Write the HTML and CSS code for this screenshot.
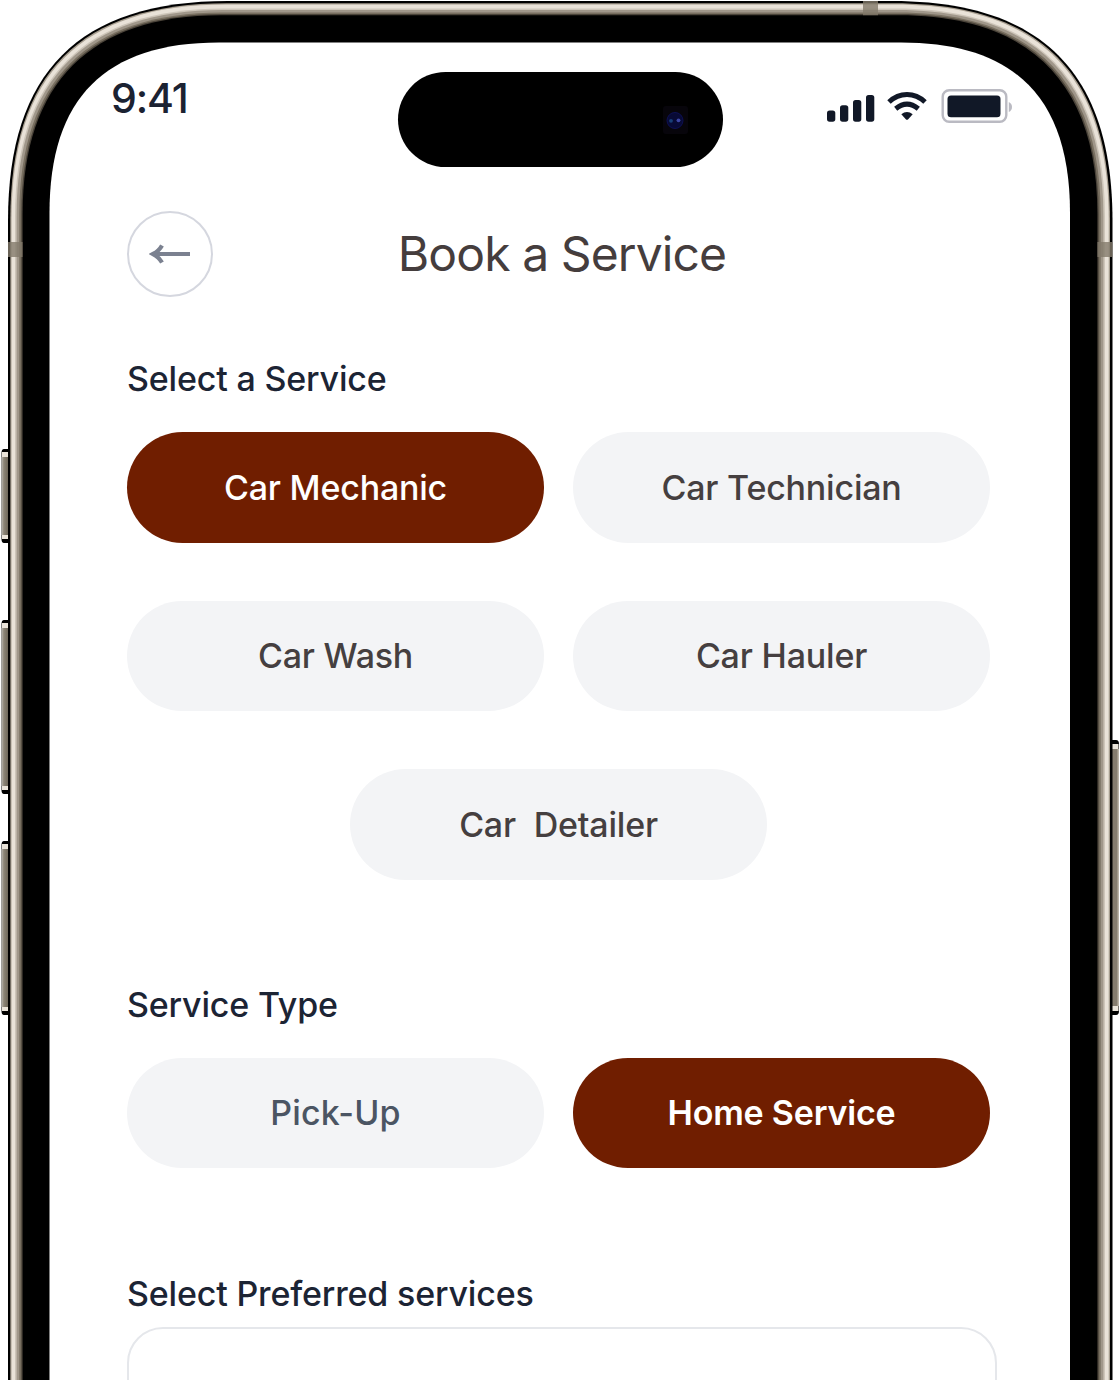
FILE: index.html
```html
<!DOCTYPE html>
<html lang="en">
<head>
<meta charset="utf-8">
<title>Book a Service</title>
<link rel="stylesheet" href="styles.css">
</head>
<body>
<div class="phone">
  <svg class="frame" viewBox="0 0 1120 1380" aria-hidden="true">
    <defs>
      <linearGradient id="key" x1="0" x2="1"><stop offset="0" stop-color="#bdbab5"/><stop offset=".35" stop-color="#8d8678"/><stop offset="1" stop-color="#6f685b"/></linearGradient>
    </defs>
    <g id="left-keys">
      <path fill="#000" d="M9 449H4Q1.500 449 1.500 453V539Q1.500 543 4 543H9ZM9 620H4Q1.500 620 1.500 624V790Q1.500 794 4 794H9ZM9 841H4Q1.500 841 1.500 845V1011Q1.500 1015 4 1015H9Z"/>
      <path fill="#e9e3d9" d="M2 452H8V539H2ZM2 623H8V790H2ZM2 844H8V1011H2Z"/>
      <path fill="url(#key)" d="M1.500 457H8V535H1.500ZM1.500 628H8V786H1.500ZM1.500 849H8V1007H1.500Z"/>
    </g>
    <path fill="#000" d="M1111 740H1116Q1119 740 1119 744V1011Q1119 1015 1116 1015H1111Z"/>
    <path fill="#e9e3d9" d="M1112 744H1118.500V1011H1112Z"/>
    <path fill="#857c6e" d="M1112 749H1118V1006H1112Z"/>
    <path fill="#bbb3a6" d="M1117.500 749H1119V1006H1117.500Z"/>
    <path fill="#000" d="M8 1400V221C8 72 79 1 228 1H892C1041 1 1112.500 72 1112.500 221V1400Z"/>
    <path fill="#a79e90" d="M10.300 1400V220C10.300 73 80 3.200 227 3.200H893C1040 3.200 1110 73 1110 220V1400Z"/>
    <path fill="#e9e2d8" d="M11.500 1400V219C11.500 74 82 4.500 226 4.500H894C1038 4.500 1108.700 74 1108.700 219V1400Z"/>
    <path fill="#cdc5b9" d="M15 1400V217C15 77 85 8.500 224 8.500H896C1035 8.500 1105 77 1105 217V1400Z"/>
    <path fill="#a0978a" d="M16.600 1400V216C16.600 78 86 10 223 10H897C1034 10 1103.400 78 1103.400 216V1400Z"/>
    <path fill="#786f60" d="M19.300 1400V215C19.300 80 88 12.500 222 12.500H898C1032 12.500 1100.700 80 1100.700 215V1400Z"/>
    <path fill="#4b443a" d="M21.300 1400V214C21.300 81 90 14 221 14H899C1030 14 1098.700 81 1098.700 214V1400Z"/>
    <path fill="#000" d="M22.600 1400V214C22.600 82 91 15.300 221 15.300H899C1029 15.300 1097.400 82 1097.400 214V1400Z"/>
    <g fill="#837a6c" fill-opacity=".8">
      <path d="M8 242H22.600V257H8ZM1097.400 242H1112.500V257H1097.400ZM863 1H878V15.300H863Z"/>
    </g>
    <path fill="#fff" d="M49.500 1400V213C49.500 98 105 42.500 219 42.500H901C1015 42.500 1070 98 1070 213V1400Z"/>
  </svg>

  <header class="status">
    <span class="time">9:41</span>
    <div class="island">
      <svg width="26" height="28" viewBox="0 0 26 28"><rect width="25" height="28" rx="3" fill="#07050b"/><circle cx="12" cy="14.500" r="8" fill="#080a35" stroke="#0d1054"/><circle cx="8" cy="14.800" r="1.900" fill="#173f78"/><circle cx="15.500" cy="14.300" r="1.900" fill="#3d46a5"/></svg>
    </div>
    <svg class="indicators" width="186" height="36" viewBox="0 0 186 36">
      <g fill="#111827">
        <rect x="1" y="22.500" width="8.300" height="11.200" rx="2.600"/><rect x="14" y="17.300" width="8.300" height="16.400" rx="2.600"/><rect x="27" y="12" width="8.300" height="21.700" rx="2.600"/><rect x="40" y="7" width="8.300" height="26.700" rx="2.600"/>
        <path d="M75.300 26.300Q81 21.500 86.700 26.300L82.200 31.200Q81 32.400 79.800 31.200Z"/>
      </g>
      <g fill="none" stroke="#111827" stroke-width="5">
        <path d="M63 14C73.500 4 88.500 4 99 14"/><path d="M69.700 20.700Q81 11.500 92.300 20.700"/>
      </g>
      <rect x="116.700" y="2.200" width="63.600" height="31.600" rx="6.500" fill="none" stroke="#babac2" stroke-width="2.400"/>
      <rect x="121.500" y="7.400" width="53" height="21.800" rx="3.500" fill="#111827"/>
      <path d="M182.800 14Q186 15.500 186 19Q186 22.500 182.800 24Z" fill="#babac2"/>
    </svg>
  </header>

  <main class="content">
    <div class="titlebar">
      <button class="back" aria-label="Back"><svg width="42" height="22" viewBox="0 0 42 22" fill="none" stroke="#7b8190" stroke-width="4.200"><path d="M5 11H41"/><path d="M13 2.500Q10 8 4 11Q10 14 13 19.500"/></svg></button>
      <h1>Book a Service</h1>
    </div>

    <h2 class="first">Select a Service</h2>
    <div class="options">
      <button class="pill active">Car Mechanic</button>
      <button class="pill">Car Technician</button>
      <button class="pill">Car Wash</button>
      <button class="pill">Car Hauler</button>
      <button class="pill center">Car&nbsp; Detailer</button>
    </div>

    <h2 class="type">Service Type</h2>
    <div class="options">
      <button class="pill muted">Pick-Up</button>
      <button class="pill active strong">Home Service</button>
    </div>

    <h2 class="preferred">Select Preferred services</h2>
    <div class="field"></div>
  </main>
</div>
</body>
</html>
```
FILE: styles.css
```css
* { box-sizing: border-box; }
body { margin: 0; background: #fff; font-family: Inter, "Liberation Sans", sans-serif; }
button { border: 0; padding: 0; font: inherit; color: inherit; }
.phone { position: relative; width: 1120px; height: 1380px; overflow: hidden; }
.frame { position: absolute; inset: 0; width: 1120px; height: 1380px; }
.status {
  position: relative;
  display: grid;
  grid-template-columns: 287px 325px 1fr;
  height: 211px;
  padding: 72px 108px 0 111px;
}
.time { font-size: 41px; line-height: 52px; font-weight: 500; color: #1b2232; letter-spacing: -1.1px; }
.island {
  display: flex;
  align-items: center;
  justify-content: flex-end;
  height: 95px;
  padding-right: 34px;
  border-radius: 48px;
  background: #000;
}
.indicators { justify-self: end; margin-top: 16px; }
.content { position: relative; padding: 0 123px 0 127px; }
.titlebar { display: grid; grid-template-columns: 86px 1fr 86px; align-items: center; height: 86px; }
.back {
  display: flex;
  align-items: center;
  justify-content: center;
  width: 86px;
  height: 86px;
  border: 2px solid #d5d7df;
  border-radius: 50%;
  background: #fff;
}
h1 { margin: 0; text-align: center; font-size: 48px; line-height: 60px; font-weight: 400; color: #453d3d; white-space: nowrap; letter-spacing: -0.9px; }
h2 { margin: 0; height: 42px; font-size: 34px; line-height: 42px; font-weight: 500; color: #1c2434; white-space: nowrap; letter-spacing: -0.18px; }
.first { margin-top: 61px; }
.options { display: grid; grid-template-columns: 417px 417px; gap: 58px 29px; margin-top: 32px; }
.pill {
  display: flex;
  align-items: center;
  justify-content: center;
  height: 110.5px;
  border-radius: 56px;
  background: #f3f4f6;
  color: #453f40;
  font-size: 34px;
  font-weight: 500;
  letter-spacing: -0.2px;
  white-space: nowrap;
}
.active { background: #701e00; color: #fff; }
.muted { color: #4b5563; letter-spacing: 0.2px; }
.strong { font-weight: 600; }
.center { grid-column: 1 / -1; justify-self: center; width: 417px; }
.type { margin-top: 104px; }
.preferred { margin-top: 105px; }
.field { height: 120px; margin-top: 12px; border: 2px solid #e5e7eb; border-radius: 36px; background: #fff; }
```
